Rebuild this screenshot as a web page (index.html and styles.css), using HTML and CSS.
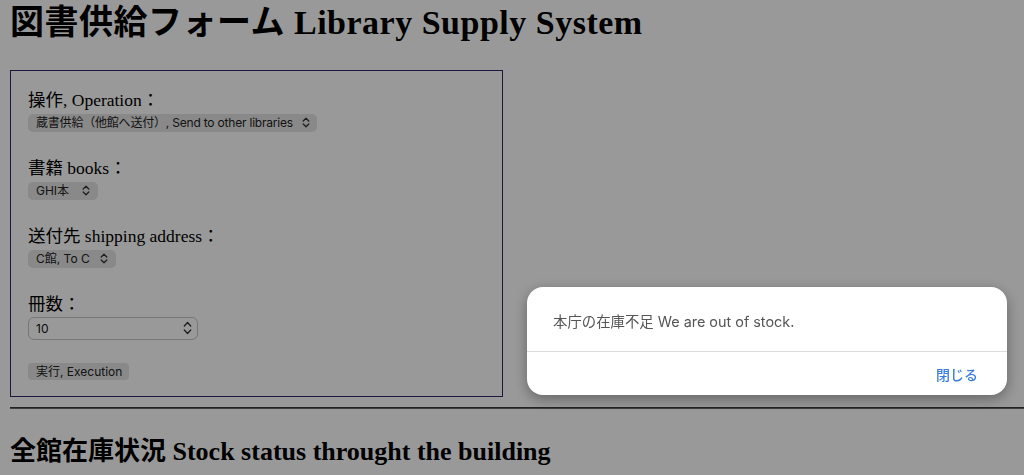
FILE: index.html
```html
<!DOCTYPE html>
<html lang="ja">
<head>
<meta charset="utf-8">
<title>図書供給フォーム</title>
<link rel="stylesheet" href="styles.css">
</head>
<body>
<h1 class="title">図書供給フォーム <span class="title-latin">Library Supply System</span></h1>

<form class="supply-form">
  <div class="field">
    <label class="field-label">操作, Operation：</label>
    <span class="select-wrap w-op">
      <select class="select"><option>蔵書供給（他館へ送付）, Send to other libraries</option></select>
      <svg class="chev" width="8" height="11" viewBox="0 0 8 11"><path d="M1.2 4 L4 1.2 L6.8 4 M1.2 7 L4 9.8 L6.8 7" fill="none" stroke="#333" stroke-width="1.3" stroke-linecap="round" stroke-linejoin="round"/></svg>
    </span>
  </div>
  <div class="field">
    <label class="field-label">書籍 books：</label>
    <span class="select-wrap w-book">
      <select class="select"><option>GHI本</option></select>
      <svg class="chev" width="8" height="11" viewBox="0 0 8 11"><path d="M1.2 4 L4 1.2 L6.8 4 M1.2 7 L4 9.8 L6.8 7" fill="none" stroke="#333" stroke-width="1.3" stroke-linecap="round" stroke-linejoin="round"/></svg>
    </span>
  </div>
  <div class="field">
    <label class="field-label">送付先 shipping address：</label>
    <span class="select-wrap w-dest">
      <select class="select"><option>C館, To C</option></select>
      <svg class="chev" width="8" height="11" viewBox="0 0 8 11"><path d="M1.2 4 L4 1.2 L6.8 4 M1.2 7 L4 9.8 L6.8 7" fill="none" stroke="#333" stroke-width="1.3" stroke-linecap="round" stroke-linejoin="round"/></svg>
    </span>
  </div>
  <div class="field field-num">
    <label class="field-label">冊数：</label>
    <span class="select-wrap w-num">
      <input class="num" type="number" value="10">
      <svg class="chev chev-num" width="9" height="14" viewBox="0 0 9 14"><path d="M1.3 5 L4.5 1.5 L7.7 5 M1.3 9 L4.5 12.5 L7.7 9" fill="none" stroke="#333" stroke-width="1.3" stroke-linecap="round" stroke-linejoin="round"/></svg>
    </span>
  </div>
  <button class="btn" type="button">実行, Execution</button>
</form>

<hr class="rule">

<h2 class="subtitle">全館在庫状況 Stock status throught the building</h2>

<div class="overlay"></div>
<div class="dialog" role="alertdialog">
  <p class="dialog-msg">本庁の在庫不足 We are out of stock.</p>
  <div class="dialog-actions">
    <button class="dialog-btn" type="button">閉じる</button>
  </div>
</div>
</body>
</html>
```

FILE: styles.css
```css
html, body {
  background: #ffffff;
}

body {
  margin: 0;
  padding: 0 0 0 10px;
  font-family: "Liberation Serif", "Noto Sans CJK JP", serif;
  color: #000;
  overflow: hidden;
}

.title {
  margin: 4px 0 0;
  font-size: 34px;
  line-height: 38px;
  font-weight: bold;
  letter-spacing: 0.5px;
}

.supply-form {
  margin: 28px 0 0;
  width: 493px;
  box-sizing: border-box;
  border: 1px solid #2e2868;
  padding: 19px 17px 16px;
}

.field {
  display: flex;
  flex-direction: column;
  align-items: flex-start;
  margin-bottom: 26px;
}

.field-label {
  font-size: 17.5px;
  line-height: 20px;
  margin-bottom: 4px;
}

.field-num {
  margin-bottom: 23px;
}

.field-num .field-label {
  margin-bottom: 3px;
}

.select-wrap {
  position: relative;
  display: inline-block;
}

.w-op { width: 289px; }
.w-book { width: 70px; }
.w-dest { width: 88px; }
.w-num { width: 170px; }

.select {
  appearance: none;
  -webkit-appearance: none;
  display: block;
  width: 100%;
  height: 18px;
  border: 0;
  border-radius: 5px;
  background: #e5e5e5;
  color: #222;
  padding: 0 0 0 8px;
  margin: 0;
  font-family: Inter, "Noto Sans CJK JP", sans-serif;
  font-size: 12px;
  line-height: 18px;
}

.w-op .select {
  letter-spacing: -0.2px;
}

.chev {
  position: absolute;
  right: 8px;
  top: 3px;
  pointer-events: none;
}

.w-op .chev { right: 7px; }

.num {
  appearance: textfield;
  -moz-appearance: textfield;
  display: block;
  width: 100%;
  height: 23px;
  box-sizing: border-box;
  border: 1px solid #c6c6c6;
  border-radius: 6px;
  background: #fff;
  padding: 0 0 0 7px;
  margin: 0;
  font-family: Inter, sans-serif;
  font-size: 12px;
  color: #111;
}

.num::-webkit-outer-spin-button,
.num::-webkit-inner-spin-button {
  -webkit-appearance: none;
  margin: 0;
}

.chev-num {
  right: 6px;
  top: 4px;
}

.btn {
  display: block;
  width: 101px;
  height: 17px;
  border: 0;
  border-radius: 4px;
  background: #e5e5e5;
  color: #222;
  padding: 0 0 0 8px;
  text-align: left;
  font-family: Inter, "Noto Sans CJK JP", sans-serif;
  font-size: 12px;
  line-height: 17px;
}

.rule {
  margin: 10px 0 0;
  border: 0;
  border-top: 1px solid #3a3a3a;
  border-bottom: 1px solid #6a6a6a;
  height: 0;
}

.subtitle {
  margin: 28px 0 0;
  font-size: 26px;
  line-height: 30px;
  font-weight: bold;
}

.overlay {
  position: fixed;
  inset: 0;
  background: rgba(0, 0, 0, 0.4);
}

.dialog {
  position: fixed;
  left: 527px;
  top: 287px;
  width: 480px;
  height: 108px;
  background: #fff;
  border-radius: 16px;
  box-shadow: 0 4px 14px rgba(0, 0, 0, 0.35);
  display: flex;
  flex-direction: column;
  font-family: Inter, "Noto Sans CJK JP", sans-serif;
  overflow: hidden;
}

.dialog-msg {
  margin: 0;
  height: 65px;
  box-sizing: border-box;
  padding: 25px 26px 0;
  font-size: 14.4px;
  line-height: 20px;
  color: #555;
  border-bottom: 1px solid #dcdcdc;
}

.dialog-actions {
  flex: 1;
  display: flex;
  justify-content: flex-end;
  align-items: center;
  padding: 0 29px 0 0;
}

.dialog-btn {
  border: 0;
  background: none;
  padding: 0;
  font-family: Inter, "Noto Sans CJK JP", sans-serif;
  font-size: 14px;
  font-weight: 500;
  color: #3b7ddd;
}
```
